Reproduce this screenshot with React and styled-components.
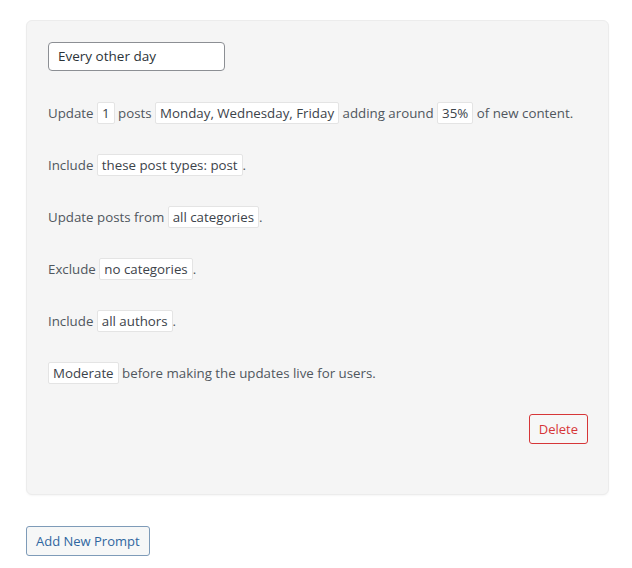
import React from 'react';
import styled, { createGlobalStyle } from 'styled-components';

const GlobalStyle = createGlobalStyle`
  body {
    margin: 0;
    background: #ffffff;
    font-family: "Open Sans", "Noto Sans", sans-serif;
  }
`;

const rows = [
  [
    'Update ',
    { t: '1' },
    ' posts ',
    { t: 'Monday, Wednesday, Friday' },
    ' adding around ',
    { t: '35%' },
    ' of new content.',
  ],
  ['Include ', { t: 'these post types: post' }, '.'],
  ['Update posts from ', { t: 'all categories' }, '.'],
  ['Exclude ', { t: 'no categories' }, '.'],
  ['Include ', { t: 'all authors' }, '.'],
  [{ t: 'Moderate' }, ' before making the updates live for users.'],
];

export default function App() {
  return (
    <Page>
      <GlobalStyle />
      <Card>
        <Select>Every other day</Select>
        {rows.map((row, i) => (
          <Row key={i}>
            {row.map((part, j) =>
              typeof part === 'string' ? (
                <Text key={j}>{part}</Text>
              ) : (
                <Token key={j}>{part.t}</Token>
              )
            )}
          </Row>
        ))}
        <Actions>
          <DeleteButton>Delete</DeleteButton>
        </Actions>
      </Card>
      <AddButton>Add New Prompt</AddButton>
    </Page>
  );
}

const Page = styled.div`
  padding: 20px 23px 12px 26px;
  width: 632px;
  box-sizing: border-box;
`;

const Card = styled.div`
  background: #f5f5f5;
  border: 1px solid #ececec;
  border-radius: 6px;
  box-shadow: 0 1px 2px rgba(0, 0, 0, 0.04);
  padding: 21px 20px 50px 21px;
  display: flex;
  flex-direction: column;
`;

const Select = styled.div`
  width: 177px;
  height: 29px;
  margin-bottom: 2px;
  box-sizing: border-box;
  border: 1px solid #8c8f94;
  border-radius: 4px;
  background: #ffffff;
  color: #2c3338;
  font-size: 13.5px;
  line-height: 27px;
  padding-left: 9px;
`;

const Row = styled.div`
  display: flex;
  align-items: center;
  height: 24px;
  margin-top: 28px;
  color: #50575e;
  font-size: 13.3px;
  white-space: pre;
`;

const Text = styled.span``;

const Token = styled.span`
  background: #ffffff;
  border: 1px solid #e4e4e4;
  border-radius: 2px;
  padding: 0 4px;
  height: 22px;
  line-height: 20px;
  box-sizing: border-box;
  color: #3c434a;
`;

const Actions = styled.div`
  display: flex;
  justify-content: flex-end;
  margin-top: 29px;
`;

const DeleteButton = styled.button`
  font-family: inherit;
  font-size: 13px;
  color: #d63638;
  background: #f6f7f7;
  border: 1px solid #d63638;
  border-radius: 3px;
  height: 30px;
  padding: 0 9px;
`;

const AddButton = styled.button`
  margin-top: 31px;
  font-family: inherit;
  font-size: 13px;
  color: #2f66a0;
  background: #f6f7f7;
  border: 1px solid #7e9bb8;
  border-radius: 3px;
  height: 30px;
  padding: 0 9px;
`;
